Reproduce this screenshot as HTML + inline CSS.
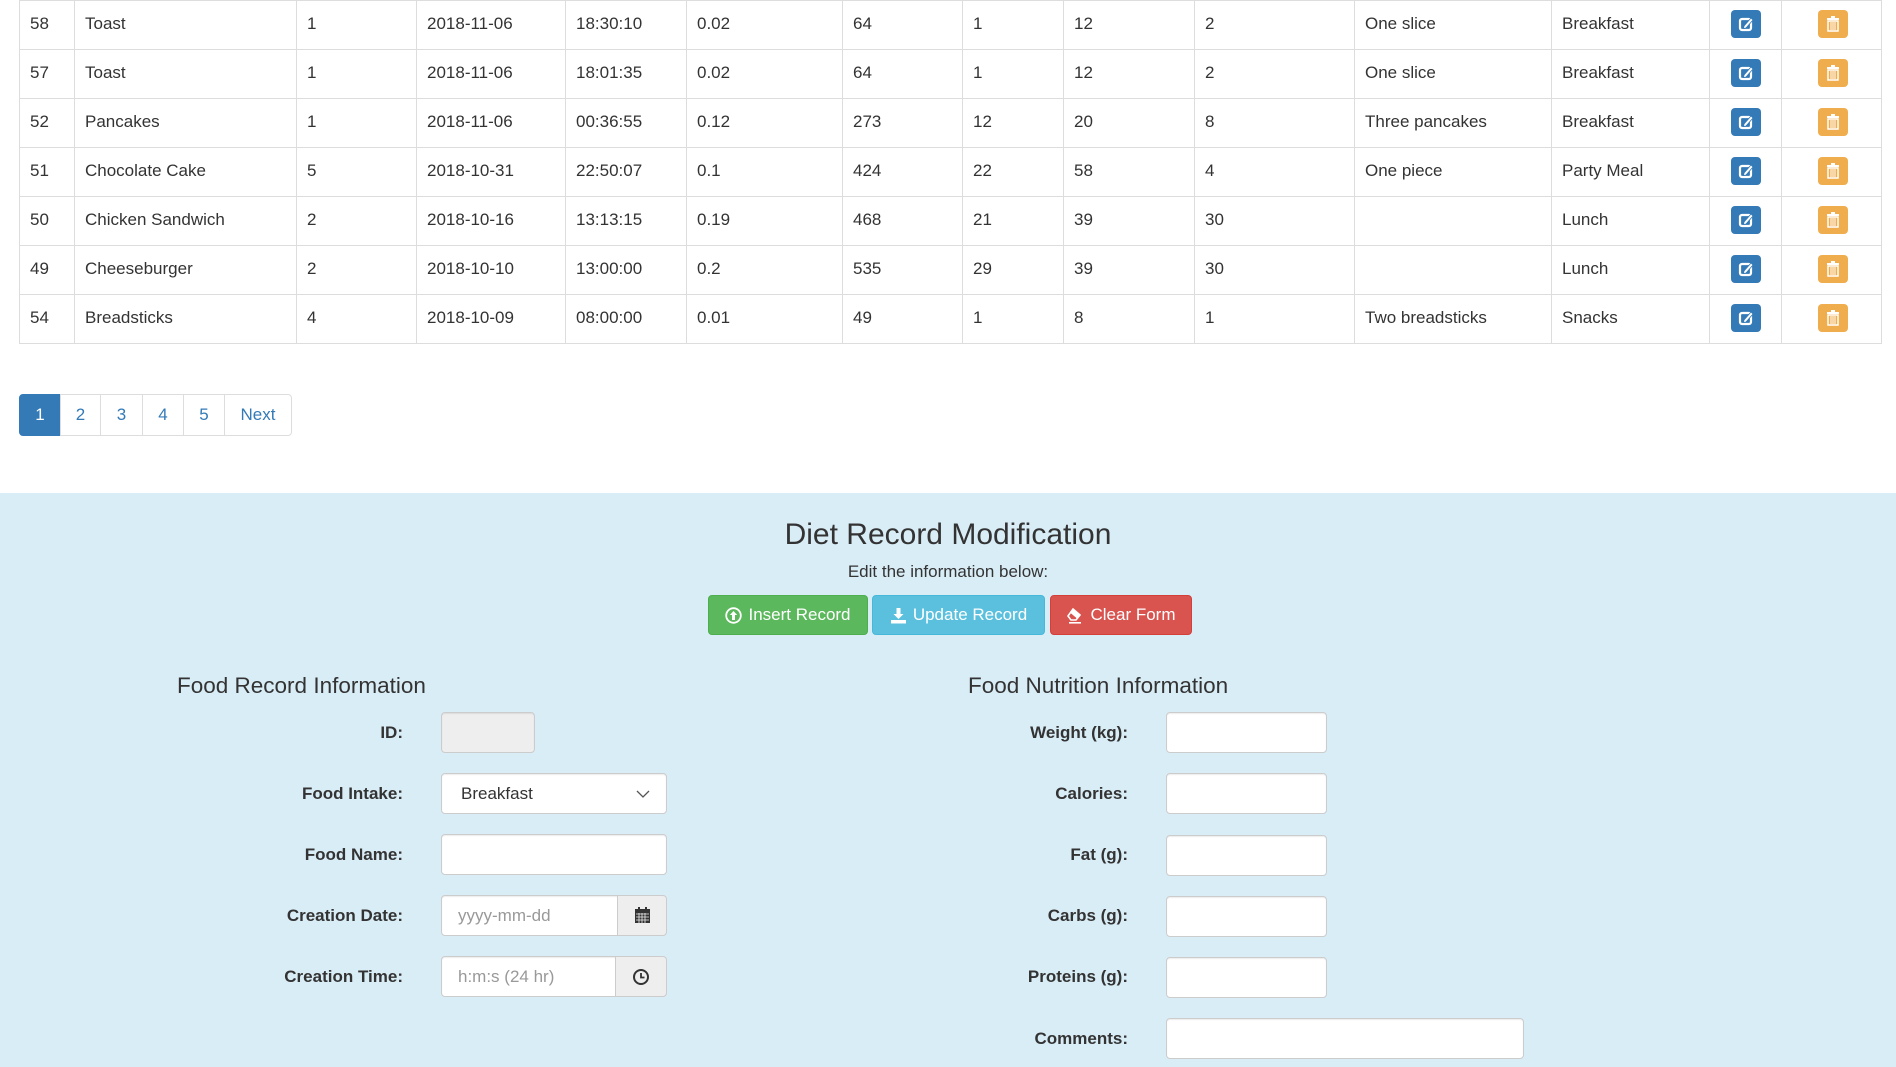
<!DOCTYPE html>
<html><head><meta charset="utf-8">
<style>
*{box-sizing:border-box}
body{margin:0;width:1896px;height:1067px;overflow:hidden;background:#fff;font-family:"Liberation Sans",Arial,sans-serif;color:#333;font-size:17px;position:relative}
table{position:absolute;left:19px;top:0;border-collapse:collapse;table-layout:fixed;width:1862px}
td{border:1px solid #ddd;height:49px;padding:0 10px 3px;vertical-align:middle;white-space:nowrap;font-size:17px}
.ic{display:inline-block;width:30px;height:28px;border-radius:4px;vertical-align:middle;position:relative}
.ed{background:#337ab7}
.tr{background:#f0ad4e}
.ic svg{position:absolute;left:0;top:0}
.pg{position:absolute;top:394px;left:19px;display:flex;height:42px}
.pg div{border:1px solid #ddd;margin-left:-1px;color:#337ab7;display:flex;align-items:center;justify-content:center;font-size:17px}
.pg div.a{background:#337ab7;border-color:#337ab7;color:#fff;border-radius:4px 0 0 4px;margin-left:0}
.pg div.l{border-radius:0 4px 4px 0}
.blue{position:absolute;left:0;top:493px;width:1896px;height:574px;background:#d9edf7}
.abs{position:absolute}
.btn{position:absolute;top:595px;height:40px;border-radius:4px;color:#fff;font-size:17px;display:flex;align-items:center;justify-content:center;gap:6px}
.lab{position:absolute;font-weight:bold;font-size:17px;text-align:right;width:300px}
.inp{position:absolute;background:#fff;border:1px solid #ccc;border-radius:4px;height:41px;box-shadow:inset 0 1px 1px rgba(0,0,0,.075);font-size:17px;color:#999;display:flex;align-items:center;padding-left:16px}
.add{position:absolute;background:#eee;border:1px solid #ccc;border-radius:0 4px 4px 0;height:41px;display:flex;align-items:center;justify-content:center}
h3{position:absolute;margin:0;font-weight:normal;font-size:22.5px;color:#333}
</style></head><body>
<table>
<colgroup><col style="width:55px"><col style="width:222px"><col style="width:120px"><col style="width:149px"><col style="width:121px"><col style="width:156px"><col style="width:120px"><col style="width:101px"><col style="width:131px"><col style="width:160px"><col style="width:197px"><col style="width:158px"><col style="width:72px"><col style="width:100px"></colgroup>
<tbody id="tb"></tbody>
</table>
<script>
var rows=[["58","Toast","1","2018-11-06","18:30:10","0.02","64","1","12","2","One slice","Breakfast"],
["57","Toast","1","2018-11-06","18:01:35","0.02","64","1","12","2","One slice","Breakfast"],
["52","Pancakes","1","2018-11-06","00:36:55","0.12","273","12","20","8","Three pancakes","Breakfast"],
["51","Chocolate Cake","5","2018-10-31","22:50:07","0.1","424","22","58","4","One piece","Party Meal"],
["50","Chicken Sandwich","2","2018-10-16","13:13:15","0.19","468","21","39","30","","Lunch"],
["49","Cheeseburger","2","2018-10-10","13:00:00","0.2","535","29","39","30","","Lunch"],
["54","Breadsticks","4","2018-10-09","08:00:00","0.01","49","1","8","1","Two breadsticks","Snacks"]];
var ed='<span class="ic ed"><svg width="30" height="28" viewBox="0 0 30 28"><rect x="9" y="9" width="11" height="11" rx="2" fill="none" stroke="#fff" stroke-width="2.2"/><path d="M13 16 L20 8 L22 10 L15 18 L12.5 18.5Z" fill="#fff" stroke="#337ab7" stroke-width="0.8"/></svg></span>';
var tr='<span class="ic tr"><svg width="30" height="28" viewBox="0 0 30 28"><rect x="9" y="8" width="12" height="2" fill="#fff"/><rect x="13" y="6" width="4" height="2" fill="#fff"/><path d="M10 11h10v10h-10z" fill="none" stroke="#fff" stroke-width="1.5"/><path d="M13 12v8M15 12v8M17 12v8" stroke="#fff" stroke-width="1"/></svg></span>';
var h="";rows.forEach(function(r){h+="<tr>";r.forEach(function(c){h+="<td>"+c+"</td>"});h+='<td style="text-align:center">'+ed+'</td><td style="text-align:center;padding-left:12px">'+tr+'</td></tr>'});
document.getElementById("tb").innerHTML=h;
</script>
<div class="pg"><div class="a" style="width:42px">1</div><div style="width:41px">2</div><div style="width:43px">3</div><div style="width:42px">4</div><div style="width:42px">5</div><div class="l" style="width:68px">Next</div></div>
<div class="blue"></div>
<div class="abs" style="left:0;width:1896px;top:518px;text-align:center;font-size:30px;color:#333">Diet Record Modification</div>
<div class="abs" style="left:0;width:1896px;top:562px;text-align:center;font-size:17px">Edit the information below:</div>
<div class="btn" style="left:708px;width:160px;background:#5cb85c;border:1px solid #4cae4c"><svg width="17" height="17" viewBox="0 0 17 17"><circle cx="8.5" cy="8.5" r="7.3" fill="none" stroke="#fff" stroke-width="1.8"/><path d="M8.5 4L4.8 8H7v5h3V8h2.2z" fill="#fff"/></svg>Insert Record</div>
<div class="btn" style="left:872px;width:173px;background:#5bc0de;border:1px solid #46b8da"><svg width="17" height="17" viewBox="0 0 17 17"><path d="M6.5 1h4v6h3L8.5 12 3.5 7h3z" fill="#fff"/><rect x="1" y="13" width="15" height="3.5" fill="#fff"/></svg>Update Record</div>
<div class="btn" style="left:1050px;width:142px;background:#d9534f;border:1px solid #d43f3a"><svg width="18" height="17" viewBox="0 0 18 17"><path d="M7 2L14 8 10 13H5L2 9z" fill="none" stroke="#fff" stroke-width="1.6"/><path d="M7 2L14 8 11 11.5 4 5.5z" fill="#fff"/><rect x="3" y="15" width="12" height="1.6" fill="#fff"/></svg>Clear Form</div>
<h3 style="left:177px;top:673px">Food Record Information</h3>
<h3 style="left:968px;top:673px">Food Nutrition Information</h3>
<div class="lab" style="left:103px;top:723px">ID:</div>
<div class="inp" style="left:441px;top:712px;width:94px;background:#eee"></div>
<div class="lab" style="left:103px;top:784px">Food Intake:</div>
<div class="inp" style="left:441px;top:773px;width:226px;color:#333;padding-left:19px">Breakfast<svg style="position:absolute;right:16px;top:16px" width="14" height="9" viewBox="0 0 14 9"><path d="M1 1l6 6 6-6" fill="none" stroke="#555" stroke-width="1.3"/></svg></div>
<div class="lab" style="left:103px;top:845px">Food Name:</div>
<div class="inp" style="left:441px;top:834px;width:226px"></div>
<div class="lab" style="left:103px;top:906px">Creation Date:</div>
<div class="inp" style="left:441px;top:895px;width:178px;border-radius:4px 0 0 4px">yyyy-mm-dd</div>
<div class="add" style="left:617px;top:895px;width:50px"><svg width="17" height="17" viewBox="0 0 17 17"><rect x="1" y="2" width="15" height="14" fill="#333"/><rect x="4" y="0" width="2" height="3" fill="#333"/><rect x="11" y="0" width="2" height="3" fill="#333"/><path d="M2 7h13M2 10h13M2 13h13M5 6v10M8 6v10M11 6v10" stroke="#eee" stroke-width="0.8"/></svg></div>
<div class="lab" style="left:103px;top:967px">Creation Time:</div>
<div class="inp" style="left:441px;top:956px;width:176px;border-radius:4px 0 0 4px">h:m:s (24 hr)</div>
<div class="add" style="left:615px;top:956px;width:52px"><svg width="18" height="18" viewBox="0 0 18 18"><circle cx="9" cy="9" r="7" fill="none" stroke="#333" stroke-width="2"/><path d="M9 5v4.5h3.5" fill="none" stroke="#333" stroke-width="1.8"/></svg></div>
<div class="lab" style="left:828px;top:723px">Weight (kg):</div>
<div class="inp" style="left:1166px;top:712px;width:161px"></div>
<div class="lab" style="left:828px;top:784px">Calories:</div>
<div class="inp" style="left:1166px;top:773px;width:161px"></div>
<div class="lab" style="left:828px;top:845px">Fat (g):</div>
<div class="inp" style="left:1166px;top:835px;width:161px"></div>
<div class="lab" style="left:828px;top:906px">Carbs (g):</div>
<div class="inp" style="left:1166px;top:896px;width:161px"></div>
<div class="lab" style="left:828px;top:967px">Proteins (g):</div>
<div class="inp" style="left:1166px;top:957px;width:161px"></div>
<div class="lab" style="left:828px;top:1029px">Comments:</div>
<div class="inp" style="left:1166px;top:1018px;width:358px"></div>
</body></html>
